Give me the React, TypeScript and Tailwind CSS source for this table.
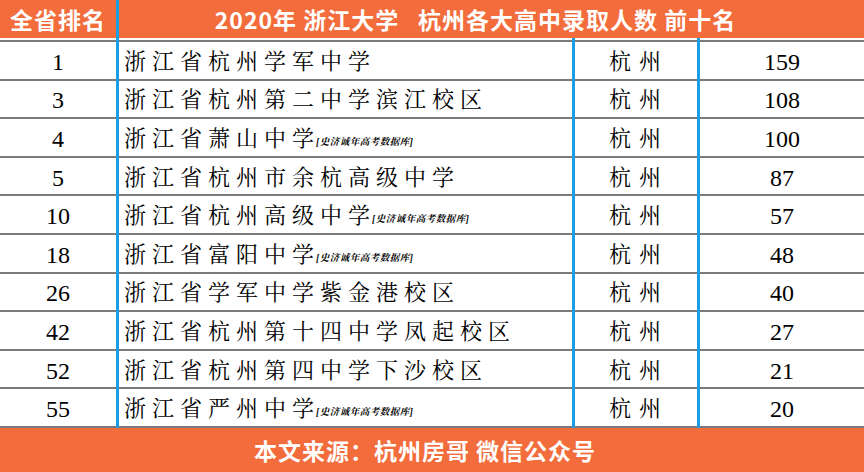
import React from "react";

const rows: { rank: string; name: string; note?: boolean; count: string }[] = [
  { rank: "1", name: "浙江省杭州学军中学", count: "159" },
  { rank: "3", name: "浙江省杭州第二中学滨江校区", count: "108" },
  { rank: "4", name: "浙江省萧山中学", note: true, count: "100" },
  { rank: "5", name: "浙江省杭州市余杭高级中学", count: "87" },
  { rank: "10", name: "浙江省杭州高级中学", note: true, count: "57" },
  { rank: "18", name: "浙江省富阳中学", note: true, count: "48" },
  { rank: "26", name: "浙江省学军中学紫金港校区", count: "40" },
  { rank: "42", name: "浙江省杭州第十四中学凤起校区", count: "27" },
  { rank: "52", name: "浙江省杭州第四中学下沙校区", count: "21" },
  { rank: "55", name: "浙江省严州中学", note: true, count: "20" },
];

const serif = {
  fontFamily:
    '"Liberation Serif", "Noto Serif CJK SC", "Noto Sans CJK SC", serif',
};
const sans = {
  fontFamily: '"Noto Sans CJK SC", "Noto Sans", sans-serif',
};

export default function App() {
  return (
    <div className="w-[864px] h-[472px] bg-white flex flex-col overflow-hidden">
      {/* header */}
      <div
        className="h-[38px] flex bg-[#f36c3c] text-white font-bold text-[23px] tracking-[1px]"
        style={sans}
      >
        <div className="w-[116px] flex items-center justify-center">
          全省排名
        </div>
        <div className="w-[3px] bg-[#1c9ee2]" />
        <div className="flex-1 flex items-center justify-center pr-[32px] whitespace-pre">
          2020年 浙江大学{"   "}杭州各大高中录取人数 前十名
        </div>
      </div>
      {/* spacer line */}
      <div className="h-[4px] flex">
        <div className="w-[116px] border-b-2 border-[#7a7a7a]" />
        <div className="w-[3px] bg-[#1c9ee2]" />
        <div className="w-[453px] border-b-2 border-[#7a7a7a]" />
        <div className="w-[3px] bg-[#1c9ee2]" />
        <div className="w-[122px] border-b-2 border-[#7a7a7a]" />
        <div className="w-[3px] bg-[#1c9ee2]" />
        <div className="flex-1 border-b-2 border-[#7a7a7a]" />
      </div>
      {/* body */}
      <div className="flex flex-col text-black" style={serif}>
        {rows.map((r) => (
          <div key={r.rank} className="h-[38.6px] flex">
            <div className="w-[116px] border-b-2 border-[#7a7a7a] flex items-center justify-center text-[24px] pt-[3px]">
              {r.rank}
            </div>
            <div className="w-[3px] bg-[#1c9ee2]" />
            <div className="w-[453px] border-b-2 border-[#7a7a7a] flex items-center pl-[5px] pt-[3px]">
              <span className="text-[22px] tracking-[6px] leading-none">
                {r.name}
              </span>
              {r.note && (
                <span className="self-end mb-[8px] -ml-[4px] text-[9.5px] italic font-bold leading-none tracking-[0.5px]">
                  [史济诚年高考数据库]
                </span>
              )}
            </div>
            <div className="w-[3px] bg-[#1c9ee2]" />
            <div className="w-[122px] border-b-2 border-[#7a7a7a] flex items-center justify-center pl-[6px] pt-[3px]">
              <span className="text-[22px] tracking-[8px] leading-none">杭州</span>
            </div>
            <div className="w-[3px] bg-[#1c9ee2]" />
            <div className="flex-1 border-b-2 border-[#7a7a7a] flex items-center justify-center text-[24px] pt-[3px]">
              {r.count}
            </div>
          </div>
        ))}
      </div>
      {/* footer */}
      <div
        className="flex-1 bg-[#f36c3c] text-white font-bold text-[23px] tracking-[1px] flex items-center justify-center pr-[14px]"
        style={sans}
      >
        本文来源：杭州房哥 微信公众号
      </div>
    </div>
  );
}
